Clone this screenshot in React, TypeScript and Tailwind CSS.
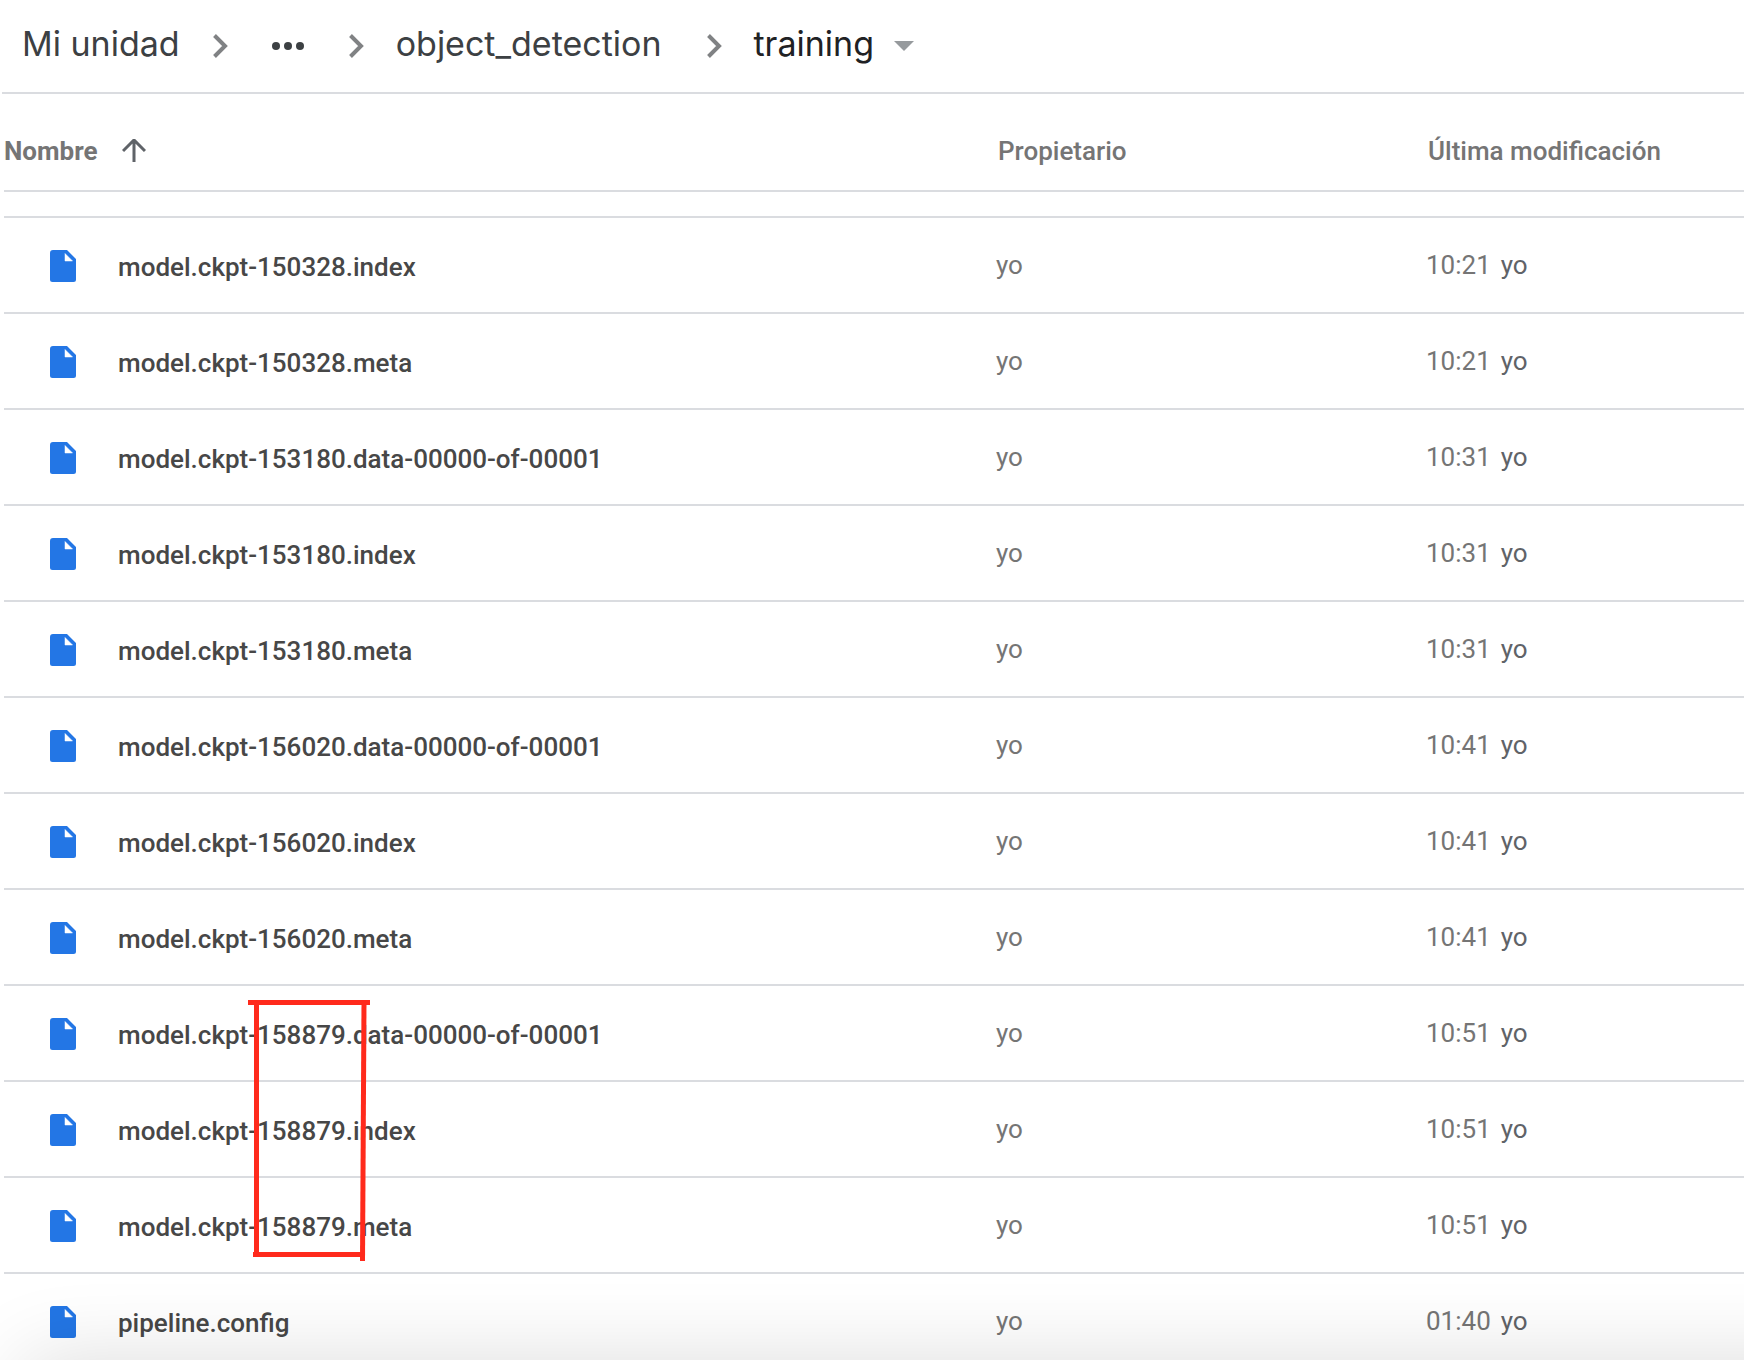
import React from "react";

type FileRow = { name: string; time: string; marked?: boolean };

const files: FileRow[] = [
  { name: "model.ckpt-150328.index", time: "10:21" },
  { name: "model.ckpt-150328.meta", time: "10:21" },
  { name: "model.ckpt-153180.data-00000-of-00001", time: "10:31" },
  { name: "model.ckpt-153180.index", time: "10:31" },
  { name: "model.ckpt-153180.meta", time: "10:31" },
  { name: "model.ckpt-156020.data-00000-of-00001", time: "10:41" },
  { name: "model.ckpt-156020.index", time: "10:41" },
  { name: "model.ckpt-156020.meta", time: "10:41" },
  { name: "model.ckpt-158879.data-00000-of-00001", time: "10:51", marked: true },
  { name: "model.ckpt-158879.index", time: "10:51" },
  { name: "model.ckpt-158879.meta", time: "10:51" },
  { name: "pipeline.config", time: "01:40" },
];

function Chevron() {
  return (
    <svg className="h-6 w-4 shrink-0" viewBox="0 0 16 24" fill="none" aria-hidden="true">
      <path d="M2.500 1.500L13 12L2.500 22.500" stroke="#808284" strokeWidth="4" />
    </svg>
  );
}

function FileIcon() {
  return (
    <svg className="h-8 w-[26px] shrink-0" viewBox="0 0 26 32" aria-hidden="true">
      <path
        d="M3 0H17L26 9V29.500a2.500 2.500 0 0 1-2.500 2.500H2.500a2.500 2.500 0 0 1-2.500-2.500V3a3 3 0 0 1 3-3Z"
        fill="#2376e5"
      />
      <path d="M15 3.500V11H22.500Z" fill="#fff" stroke="#fff" strokeOpacity=".5" />
    </svg>
  );
}

/* Hand-drawn frame around the latest checkpoint number. */
function Mark() {
  return (
    <svg
      className="pointer-events-none absolute top-3.5 left-[244px] z-10 h-[261px] w-[122px]"
      viewBox="0 0 122 261"
      aria-hidden="true"
    >
      <g stroke="#ff2a1c" strokeWidth="5" fill="none">
        <path d="M0 2.500H122" />
        <path d="M8.500 2V255" />
        <path d="M116 3L114.500 261" />
        <path d="M5 254.500H116" />
      </g>
    </svg>
  );
}

export default function App() {
  return (
    <main className="relative h-screen overflow-hidden bg-white font-[Roboto,sans-serif] text-[26px] leading-8 text-[#757575]">
      <nav
        aria-label="Ruta"
        className="ml-0.5 flex h-[94px] items-center border-b-2 border-[#dadce0] pl-5 font-[Inter,sans-serif] text-[34px] leading-[44px] text-[#3c4043]"
      >
        <a href="#mi-unidad" className="pb-1">Mi unidad</a>
        <span className="ml-8">
          <Chevron />
        </span>
        <button type="button" aria-label="Mostrar ruta" className="ml-11">
          <svg className="h-2 w-8" viewBox="0 0 32 8" fill="#3c4043" aria-hidden="true">
            <circle cx="4" cy="4" r="4" />
            <circle cx="16" cy="4" r="4" />
            <circle cx="28" cy="4" r="4" />
          </svg>
        </button>
        <span className="ml-11">
          <Chevron />
        </span>
        <a href="#object_detection" className="ml-8 pb-1">
          object_detection
        </a>
        <span className="ml-11">
          <Chevron />
        </span>
        <button type="button" className="ml-8 flex items-center gap-5 text-[#202124]">
          <span className="pb-1">training</span>
          <svg className="h-2.5 w-5" viewBox="0 0 20 10" fill="#969a9d" aria-hidden="true">
            <path d="M0 0H20L10 10Z" />
          </svg>
        </button>
      </nav>

      <div className="pl-1">
        <table className="w-full table-fixed border-separate border-spacing-0 text-left">
          <colgroup>
            <col />
            <col className="w-[430px]" />
            <col className="w-[318px]" />
          </colgroup>
          <thead>
            <tr className="h-[98px]">
              <th className="border-b-2 border-[#dadce0] pt-[18px] font-bold">
                <button type="button" className="flex items-center gap-6">
                  Nombre
                  <svg className="h-6 w-6" viewBox="0 0 24 24" fill="none" stroke="#5f6368" strokeWidth="3" aria-hidden="true">
                    <path d="M12 23V1M1 12L12 1L23 12" />
                  </svg>
                </button>
              </th>
              <th className="border-b-2 border-[#dadce0] pt-[18px] pl-0.5 font-medium">Propietario</th>
              <th className="border-b-2 border-[#dadce0] pt-[18px] pl-0.5 font-medium">Última modificación</th>
            </tr>
          </thead>
          <tbody>
            <tr className="h-[26px]">
              <td colSpan={3} className="border-b-2 border-[#dadce0]" />
            </tr>
            {files.map((f) => (
              <tr key={f.name} className="h-24">
                <td className="relative border-b-2 border-[#dadce0] pt-0.5 pl-[46px] font-medium text-[#474747]">
                  <div className="flex items-center gap-[42px] whitespace-nowrap">
                    <FileIcon />
                    <span className="pt-0.5">{f.name}</span>
                  </div>
                  {f.marked && <Mark />}
                </td>
                <td className="border-b-2 border-[#dadce0]">yo</td>
                <td className="border-b-2 border-[#dadce0]">
                  {f.time}
                  <span className="ml-2.5 text-[#5f6368]">yo</span>
                </td>
              </tr>
            ))}
          </tbody>
        </table>
      </div>

      <div className="pointer-events-none absolute top-full -right-40 left-6 h-40 shadow-[0_0_84px_rgba(0,0,0,0.14)]" />
    </main>
  );
}
